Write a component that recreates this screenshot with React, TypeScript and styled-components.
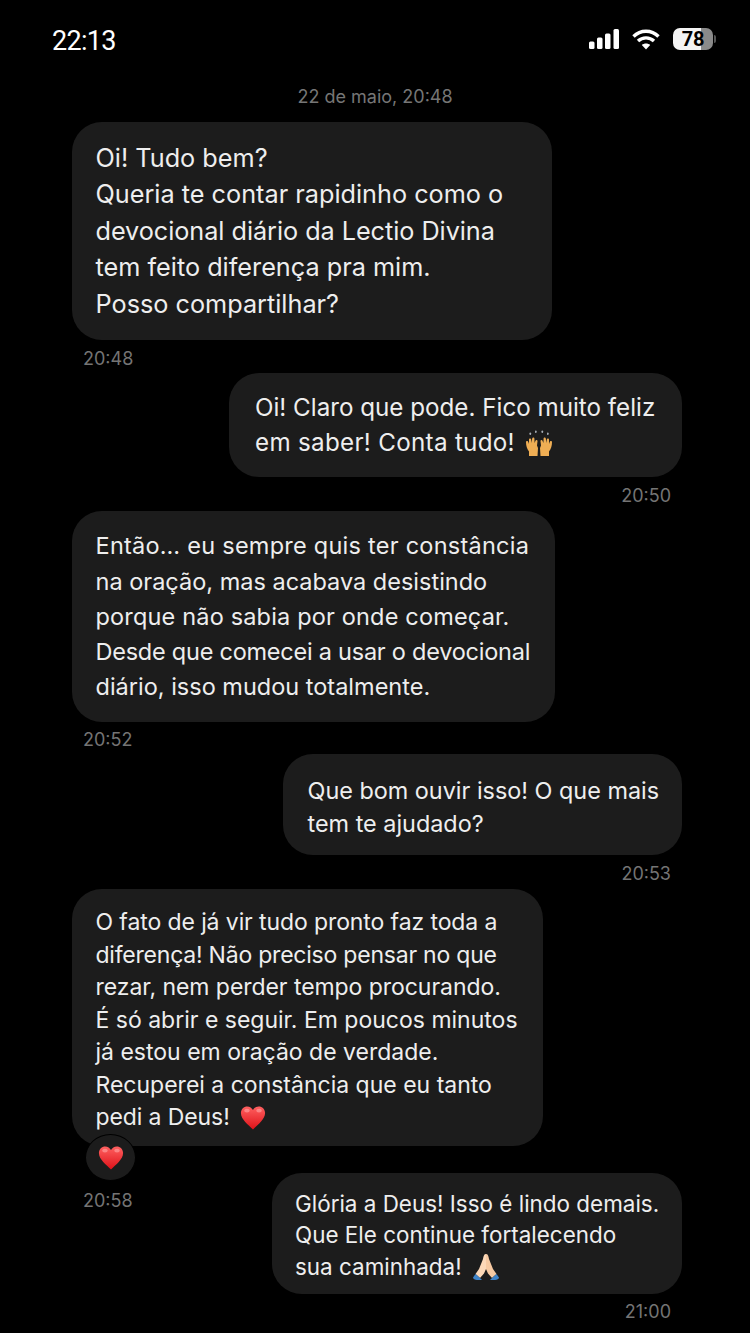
import React from "react";
import styled, { createGlobalStyle } from "styled-components";

const GlobalStyle = createGlobalStyle`
  html, body {
    margin: 0;
    padding: 0;
    background: #000;
  }
  body {
    font-family: Inter, "Noto Sans", sans-serif;
  }
`;

const Screen = styled.div`
  width: 750px;
  height: 1333px;
  background: #000;
  overflow: hidden;
  color: #f2f2f2;
`;

const StatusBar = styled.div`
  height: 79px;
  padding: 23px 34px 0 52px;
  box-sizing: border-box;
  display: flex;
  justify-content: space-between;
  align-items: flex-start;
`;

const Clock = styled.div`
  font-family: Roboto, sans-serif;
  font-size: 27px;
  line-height: 36px;
  font-weight: 400;
  letter-spacing: -0.7px;
  color: #fff;
`;

const StatusIcons = styled.div`
  display: flex;
  align-items: center;
  gap: 13px;
  margin-top: 5px;
`;

const Battery = styled.div`
  width: 40px;
  height: 22px;
  border-radius: 7px;
  overflow: hidden;
  background: linear-gradient(to right, #f4f4f4 70%, #8a8a8a 70%);
  color: #000;
  font-family: Roboto, sans-serif;
  font-size: 20px;
  font-weight: 700;
  line-height: 23px;
  letter-spacing: -0.3px;
  text-align: center;
`;

const BatteryWrap = styled.div`
  display: flex;
  align-items: center;
  gap: 1px;
`;

const BatteryCap = styled.div`
  width: 2px;
  height: 8px;
  border-radius: 0 2px 2px 0;
  background: #555;
`;

const DateLabel = styled.div`
  text-align: center;
  font-size: 18px;
  line-height: 36px;
  height: 36px;
  color: #767676;
`;

const Thread = styled.div`
  display: flex;
  flex-direction: column;
  padding: 7px 68px 0 72px;
`;

const Row = styled.div<{ $mine?: boolean; $gap: number }>`
  display: flex;
  flex-direction: column;
  align-items: ${(p) => (p.$mine ? "flex-end" : "flex-start")};
  margin-bottom: ${(p) => p.$gap}px;
`;

const Bubble = styled.div<{
  $w: number;
  $h: number;
  $px: number;
  $pt?: number;
  $size: number;
  $lh: number;
}>`
  box-sizing: border-box;
  width: ${(p) => p.$w}px;
  height: ${(p) => p.$h}px;
  padding: ${(p) => p.$pt ?? 0}px 0 0 ${(p) => p.$px}px;
  display: flex;
  flex-direction: column;
  justify-content: center;
  border-radius: 30px;
  background: #1c1c1c;
  color: #eeeeee;
  font-size: ${(p) => p.$size}px;
  line-height: ${(p) => p.$lh}px;
  white-space: nowrap;
`;

// $ls nudges a single line to the width it has in the reference
const Line = styled.div<{ $ls?: number }>`
  display: flex;
  align-items: center;
  gap: 10px;
  letter-spacing: ${(p) => p.$ls ?? 0}px;
`;

const Time = styled.div<{ $mine?: boolean; $top: number }>`
  font-size: 18px;
  line-height: 24px;
  color: #747474;
  margin-top: ${(p) => p.$top}px;
  padding: ${(p) => (p.$mine ? "0 11px 0 0" : "0 0 0 11px")};
`;

const ReactedWrap = styled.div`
  position: relative;
`;

const Reaction = styled.div`
  position: absolute;
  left: 13px;
  bottom: -35px;
  width: 51px;
  height: 47px;
  border-radius: 50%;
  background: #1c1c1c;
  border: 1px solid #000;
  box-sizing: border-box;
  display: flex;
  align-items: center;
  justify-content: center;
`;

const Heart = ({ size = 26 }: { size?: number }) => (
  <svg width={size} height={size} viewBox="0 0 28 28">
    <defs>
      <linearGradient id="heartFill" x1="0" y1="0" x2="0" y2="1">
        <stop offset="0" stopColor="#ff6060" />
        <stop offset="1" stopColor="#dd1118" />
      </linearGradient>
    </defs>
    <path
      d="M14 26.500C9 21 1 15.500 1 8.500C1 4.400 4.200 1.500 7.800 1.500C10.500 1.500 12.800 3 14 5.500C15.200 3 17.500 1.500 20.200 1.500C23.800 1.500 27 4.400 27 8.500C27 15.500 19 21 14 26.500Z"
      fill="url(#heartFill)"
    />
    <ellipse cx="7.500" cy="6" rx="3" ry="2" fill="#ff9a9a" opacity="0.7" />
    <ellipse cx="20.500" cy="6" rx="3" ry="2" fill="#ff9a9a" opacity="0.7" />
  </svg>
);

const RaisedHands = () => (
  <svg width="28" height="26" viewBox="0 0 28 26">
    <g fill="#efae54">
      <path d="M1 12C1 10.500 3 10.500 3.300 12L4 14L4 9.500C4 8 6 8 6.200 9.500L6.600 13L7.200 8.500C7.400 7.300 9.400 7.300 9.400 8.700L9.600 13L10.600 10.500C11.200 9.300 12.800 10 12.500 11.300L12 15.500L13 18L12.500 26L4 26L4 21.500C2 19 1 16 1 12Z" />
      <path d="M27 12C27 10.500 25 10.500 24.700 12L24 14L24 9.500C24 8 22 8 21.800 9.500L21.400 13L20.800 8.500C20.600 7.300 18.600 7.300 18.600 8.700L18.400 13L17.400 10.500C16.800 9.300 15.200 10 15.500 11.300L16 15.500L15 18L15.500 26L24 26L24 21.500C26 19 27 16 27 12Z" />
    </g>
    <g fill="#a9b0b8">
      <rect x="4.500" y="2.500" width="1.600" height="2.600" rx="0.800" />
      <rect x="10" y="0.500" width="1.600" height="2.600" rx="0.800" />
      <rect x="16.500" y="0.500" width="1.600" height="2.600" rx="0.800" />
      <rect x="22" y="2.500" width="1.600" height="2.600" rx="0.800" />
    </g>
  </svg>
);

const PrayingHands = () => (
  <svg width="28" height="28" viewBox="0 0 28 28">
    <path d="M14 1C12 1 11.500 3 11 6L7 16L3.500 21L8 25L12 20.500L14 16Z" fill="#fcd8b8" />
    <path d="M14 1C16 1 16.500 3 17 6L21 16L24.500 21L20 25L16 20.500L14 16Z" fill="#f6c9a2" />
    <path d="M3.500 21L1 24.500C1 26 3 27 5 27L10 27L8 25Z" fill="#3f83c8" />
    <path d="M24.500 21L27 24.500C27 26 25 27 23 27L18 27L20 25Z" fill="#3f83c8" />
  </svg>
);

const SignalBars = () => (
  <svg width="30" height="20" viewBox="0 0 30 20" fill="#fff">
    <rect x="0" y="12.500" width="5.500" height="7.500" rx="1.500" />
    <rect x="8" y="8.500" width="5.500" height="11.500" rx="1.500" />
    <rect x="16" y="4.500" width="5.500" height="15.500" rx="1.500" />
    <rect x="24.500" y="0" width="5.500" height="20" rx="1.500" />
  </svg>
);

const WifiIcon = () => (
  <svg width="28" height="21" viewBox="0 0 28 21" fill="none" stroke="#fff" strokeWidth="3.400">
    <path d="M1.500 7.500C8.500 0.500 19.500 0.500 26.500 7.500" />
    <path d="M6 12C10.500 7.800 17.500 7.800 22 12" />
    <path d="M14 20.500L9.800 16C12 14 16 14 18.200 16Z" fill="#fff" stroke="none" />
  </svg>
);

export default function App() {
  return (
    <Screen>
      <GlobalStyle />
      <StatusBar>
        <Clock>22:13</Clock>
        <StatusIcons>
          <SignalBars />
          <WifiIcon />
          <BatteryWrap>
            <Battery>78</Battery>
            <BatteryCap />
          </BatteryWrap>
        </StatusIcons>
      </StatusBar>
      <DateLabel>22 de maio, 20:48</DateLabel>
      <Thread>
        <Row $gap={2}>
          <Bubble $w={480} $h={218} $px={23.500} $size={25.250} $lh={36.500}>
            <Line>Oi! Tudo bem?</Line>
            <Line>Queria te contar rapidinho como o</Line>
            <Line $ls={-0.050}>devocional diário da Lectio Divina</Line>
            <Line>tem feito diferença pra mim.</Line>
            <Line>Posso compartilhar?</Line>
          </Bubble>
          <Time $top={7}>20:48</Time>
        </Row>
        <Row $mine $gap={3}>
          <Bubble $w={453} $h={104} $px={26} $size={24.200} $lh={35}>
            <Line>Oi! Claro que pode. Fico muito feliz</Line>
            <Line $ls={0.300}>
              em saber! Conta tudo! <RaisedHands />
            </Line>
          </Bubble>
          <Time $mine $top={7}>20:50</Time>
        </Row>
        <Row $gap={2}>
          <Bubble $w={483} $h={211} $px={23.500} $size={23.500} $lh={35.200}>
            <Line $ls={0.250}>Então… eu sempre quis ter constância</Line>
            <Line>na oração, mas acabava desistindo</Line>
            <Line $ls={0.170}>porque não sabia por onde começar.</Line>
            <Line $ls={-0.240}>Desde que comecei a usar o devocional</Line>
            <Line>diário, isso mudou totalmente.</Line>
          </Bubble>
          <Time $top={6}>20:52</Time>
        </Row>
        <Row $mine $gap={3}>
          <Bubble $w={399} $h={101} $px={24.500} $pt={4} $size={23.400} $lh={33}>
            <Line>Que bom ouvir isso! O que mais</Line>
            <Line>tem te ajudado?</Line>
          </Bubble>
          <Time $mine $top={7}>20:53</Time>
        </Row>
        <Row $gap={-40}>
          <ReactedWrap>
            <Bubble $w={471} $h={257} $px={23.500} $pt={5} $size={23} $lh={32.500}>
              <Line $ls={-0.100}>O fato de já vir tudo pronto faz toda a</Line>
              <Line $ls={-0.220}>diferença! Não preciso pensar no que</Line>
              <Line $ls={-0.050}>rezar, nem perder tempo procurando.</Line>
              <Line>É só abrir e seguir. Em poucos minutos</Line>
              <Line>já estou em oração de verdade.</Line>
              <Line>Recuperei a constância que eu tanto</Line>
              <Line $ls={-0.100}>
                pedi a Deus! <Heart />
              </Line>
            </Bubble>
            <Reaction>
              <Heart />
            </Reaction>
          </ReactedWrap>
          <Time $top={43}>20:58</Time>
        </Row>
        <Row $mine $gap={0}>
          <Bubble $w={410} $h={121} $px={23} $pt={3} $size={22.450} $lh={31.500}>
            <Line>Glória a Deus! Isso é lindo demais.</Line>
            <Line>Que Ele continue fortalecendo</Line>
            <Line>
              sua caminhada! <PrayingHands />
            </Line>
          </Bubble>
          <Time $mine $top={6}>21:00</Time>
        </Row>
      </Thread>
    </Screen>
  );
}
